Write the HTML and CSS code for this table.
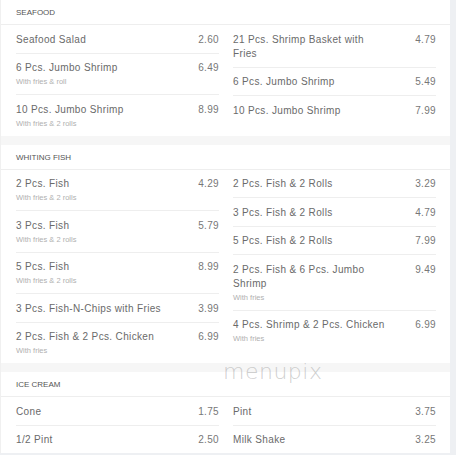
FILE: index.html
```html
<!DOCTYPE html>
<html lang="en">
<head>
    <meta charset="UTF-8">
    <meta name="viewport" content="width=device-width, initial-scale=1.0">
    <title>Menu</title>
    <link rel="stylesheet" href="styles.css">
</head>
<body>
    <div class="menu">

        <!-- Seafood -->
        <section class="menu-section">
            <div class="section-title">SEAFOOD</div>
            <div class="columns">
                <div class="column">
                    <div class="item">
                        <div class="item-row"><span class="item-name">Seafood Salad</span><span class="item-price">2.60</span></div>
                    </div>
                    <div class="item">
                        <div class="item-row"><span class="item-name">6 Pcs. Jumbo Shrimp</span><span class="item-price">6.49</span></div>
                        <div class="item-desc">With fries &amp; roll</div>
                    </div>
                    <div class="item">
                        <div class="item-row"><span class="item-name">10 Pcs. Jumbo Shrimp</span><span class="item-price">8.99</span></div>
                        <div class="item-desc">With fries &amp; 2 rolls</div>
                    </div>
                </div>
                <div class="column">
                    <div class="item">
                        <div class="item-row"><span class="item-name">21 Pcs. Shrimp Basket with Fries</span><span class="item-price">4.79</span></div>
                    </div>
                    <div class="item">
                        <div class="item-row"><span class="item-name">6 Pcs. Jumbo Shrimp</span><span class="item-price">5.49</span></div>
                    </div>
                    <div class="item">
                        <div class="item-row"><span class="item-name">10 Pcs. Jumbo Shrimp</span><span class="item-price">7.99</span></div>
                    </div>
                </div>
            </div>
        </section>

        <!-- Whiting fish -->
        <section class="menu-section">
            <div class="section-title">WHITING FISH</div>
            <div class="columns">
                <div class="column">
                    <div class="item">
                        <div class="item-row"><span class="item-name">2 Pcs. Fish</span><span class="item-price">4.29</span></div>
                        <div class="item-desc">With fries &amp; 2 rolls</div>
                    </div>
                    <div class="item">
                        <div class="item-row"><span class="item-name">3 Pcs. Fish</span><span class="item-price">5.79</span></div>
                        <div class="item-desc">With fries &amp; 2 rolls</div>
                    </div>
                    <div class="item">
                        <div class="item-row"><span class="item-name">5 Pcs. Fish</span><span class="item-price">8.99</span></div>
                        <div class="item-desc">With fries &amp; 2 rolls</div>
                    </div>
                    <div class="item">
                        <div class="item-row"><span class="item-name">3 Pcs. Fish-N-Chips with Fries</span><span class="item-price">3.99</span></div>
                    </div>
                    <div class="item">
                        <div class="item-row"><span class="item-name">2 Pcs. Fish &amp; 2 Pcs. Chicken</span><span class="item-price">6.99</span></div>
                        <div class="item-desc">With fries</div>
                    </div>
                </div>
                <div class="column">
                    <div class="item">
                        <div class="item-row"><span class="item-name">2 Pcs. Fish &amp; 2 Rolls</span><span class="item-price">3.29</span></div>
                    </div>
                    <div class="item">
                        <div class="item-row"><span class="item-name">3 Pcs. Fish &amp; 2 Rolls</span><span class="item-price">4.79</span></div>
                    </div>
                    <div class="item">
                        <div class="item-row"><span class="item-name">5 Pcs. Fish &amp; 2 Rolls</span><span class="item-price">7.99</span></div>
                    </div>
                    <div class="item">
                        <div class="item-row"><span class="item-name">2 Pcs. Fish &amp; 6 Pcs. Jumbo Shrimp</span><span class="item-price">9.49</span></div>
                        <div class="item-desc">With fries</div>
                    </div>
                    <div class="item">
                        <div class="item-row"><span class="item-name">4 Pcs. Shrimp &amp; 2 Pcs. Chicken</span><span class="item-price">6.99</span></div>
                        <div class="item-desc">With fries</div>
                    </div>
                </div>
            </div>
        </section>

        <!-- Ice cream -->
        <section class="menu-section">
            <div class="section-title">ICE CREAM</div>
            <div class="columns">
                <div class="column">
                    <div class="item">
                        <div class="item-row"><span class="item-name">Cone</span><span class="item-price">1.75</span></div>
                    </div>
                    <div class="item">
                        <div class="item-row"><span class="item-name">1/2 Pint</span><span class="item-price">2.50</span></div>
                    </div>
                </div>
                <div class="column">
                    <div class="item">
                        <div class="item-row"><span class="item-name">Pint</span><span class="item-price">3.75</span></div>
                    </div>
                    <div class="item">
                        <div class="item-row"><span class="item-name">Milk Shake</span><span class="item-price">3.25</span></div>
                    </div>
                </div>
            </div>
        </section>

        <div class="watermark">menupix</div>
    </div>
</body>
</html>
```

FILE: styles.css
```css
/* Menu listing */

body {
    margin: 0;
    padding: 0;
    background-color: #eef0f3;
    font-family: 'Liberation Sans', Arial, sans-serif;
    color: #666;
}

.menu {
    position: relative;
    width: 450px;
    background-color: #f6f6f6;
    display: flex;
    flex-direction: column;
    gap: 9px;
    border-left: 1px solid #f0f0f0;
    box-sizing: border-box;
}

.menu-section {
    background-color: #fff;
}

.section-title {
    height: 24px;
    line-height: 25px;
    padding-left: 15px;
    font-size: 8px;
    color: #555;
    border-bottom: 1px solid #eee;
}

.columns {
    display: grid;
    grid-template-columns: 203px 203px;
    gap: 14px;
    padding-left: 15px;
}

.item {
    padding: 7.5px 0 6px 0;
    border-bottom: 1px solid #eee;
}

.item:last-child {
    border-bottom: none;
}

.item-row {
    display: flex;
    justify-content: space-between;
    align-items: flex-start;
    font-size: 10px;
    line-height: 14px;
    letter-spacing: 0.35px;
    color: #6a6a6a;
}

.item-name {
    max-width: 153px;
}

.item-price {
    color: #777;
}

.item-desc {
    font-size: 7.5px;
    line-height: 13px;
    color: #b0b0b0;
}

.watermark {
    position: absolute;
    left: 222px;
    top: 359px;
    font-family: 'DejaVu Sans', sans-serif;
    font-weight: 200;
    font-size: 22px;
    letter-spacing: 0.5px;
    color: rgba(160, 160, 160, 0.5);
}
```
